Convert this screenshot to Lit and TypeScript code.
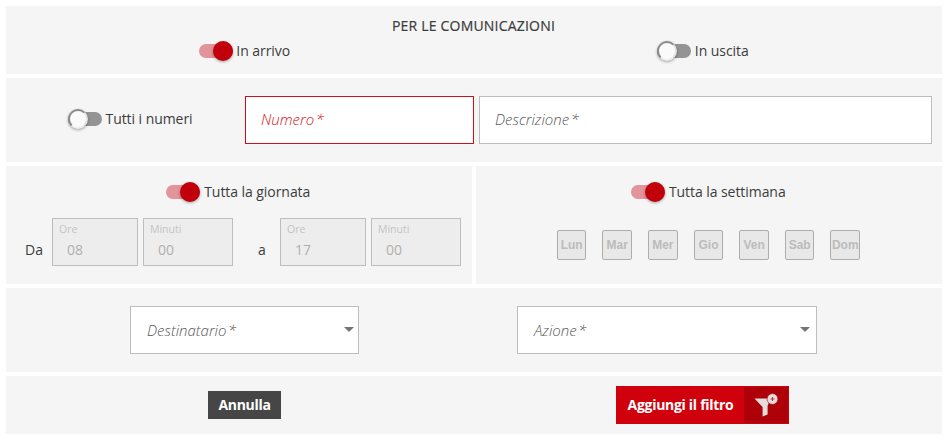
import { LitElement, html, css } from "lit";
import { customElement, property } from "lit/decorators.js";

@customElement("slide-toggle")
class SlideToggle extends LitElement {
  @property({ type: Boolean }) checked = false;
  @property() label = "";
  static styles = css`
    :host { display: inline-flex; align-items: center; gap: 3.5px; height: 20px; white-space: nowrap; }
    .track { display: flex; align-items: center; width: 34px; height: 14px; border-radius: 7px; background: #949494; flex: none; }
    .track.on { background: #e2949a; justify-content: flex-end; }
    .knob { box-sizing: border-box; flex: none; width: 20px; height: 20px; border-radius: 50%; background: #fafafa; border: 2px solid; border-color: #8b8b8b #e4e4e4 #eeeeee #8b8b8b; box-shadow: 0 1px 3px rgba(0, 0, 0, 0.35); }
    .on .knob { background: #c2000b; border: 0; }
    .label { line-height: 20px; letter-spacing: -0.06px; }
  `;
  render() {
    return html`<span class="track ${this.checked ? "on" : ""}"><span class="knob"></span></span
      ><span class="label">${this.label}</span>`;
  }
}

@customElement("text-field")
class TextField extends LitElement {
  @property() label = "";
  @property({ type: Boolean }) invalid = false;
  @property({ type: Boolean }) select = false;
  static styles = css`
    :host { display: block; }
    .box { box-sizing: border-box; height: 48px; padding: 0 var(--end, 4px) 0 15px; border: 1px solid #bdbdbd; background: #fff; color: #585858; display: flex; align-items: center; justify-content: space-between; }
    .box.invalid { border-color: #c9101c; color: #d01420; }
    .text { font-style: italic; font-weight: 300; font-size: 15px; line-height: 20px; padding-bottom: 2px; }
    .select .text { padding: 0 0 0 1px; }
    .star { margin-left: 1.6px; }
    .arrow { width: 0; height: 0; border: 5px solid transparent; border-top-color: #757575; border-bottom: 0; margin-bottom: 1px; }
  `;
  render() {
    return html`<div class="box ${this.invalid ? "invalid" : ""} ${this.select ? "select" : ""}">
      <span class="text">${this.label}<span class="star">*</span></span>
      ${this.select ? html`<span class="arrow"></span>` : null}
    </div>`;
  }
}

@customElement("time-field")
class TimeField extends LitElement {
  @property() label = "";
  @property() value = "";
  static styles = css`
    :host { display: block; }
    .box { box-sizing: border-box; height: 48px; border: 1px solid #bdbdbd; background: #ededed; color: #b0b0b0; padding: 3px 0 0 6px; }
    .label { font-size: 10.5px; line-height: 14px; color: #c4c4c4; }
    .value { padding: 4px 0 0 8px; line-height: 20px; }
  `;
  render() {
    return html`<div class="box"><div class="label">${this.label}</div><div class="value">${this.value}</div></div>`;
  }
}

@customElement("app-root")
class AppRoot extends LitElement {
  static styles = css`
    :host { display: grid; box-sizing: border-box; width: 944px; height: 439px; padding: 6px 2px 5px 6px; gap: 4px; grid-template-rows: 68px 84px 118px 84px 58px; background: #fff; color: #3c3c3c; font: 14px "Open Sans", sans-serif; }
    .panel { background: #f5f5f5; box-sizing: border-box; min-width: 0; }
    .direction { padding: 10px 10px 0 9px; }
    .title { text-align: center; line-height: 20px; font-weight: 500; letter-spacing: 0.2px; -webkit-text-stroke: 0.2px #3c3c3c; }
    .pair { display: grid; grid-template-columns: 459px 458px; justify-items: center; padding-top: 5px; }
    .numbers { display: grid; grid-template-columns: 172px 229px 453px; align-items: center; padding-left: 62px; column-gap: 5px; }
    .numbers slide-toggle { margin-bottom: 2px; }
    .columns { display: grid; grid-template-columns: 466px 466px; gap: 4px; }
    .period { display: flex; flex-direction: column; align-items: center; padding-top: 16px; }
    .period slide-toggle { gap: 4px; margin-right: 1.5px; }
    .times { display: grid; grid-template-columns: 22px 86px 90px 37px 86px 90px; column-gap: 5px; padding: 16px 0 0 19px; align-self: flex-start; }
    .word { padding-top: 22px; line-height: 20px; }
    .to { padding-left: 20px; }
    .days { display: flex; gap: 16px; padding: 28px 0 0 80.9px; align-self: flex-start; }
    .day { box-sizing: border-box; display: flex; justify-content: center; align-items: center; width: 29.6px; height: 30px; border: 1px solid #adadad; border-radius: 2px; background: #e8e8e8; color: #bcbcbc; font: bold 12px "Liberation Sans", sans-serif; }
    .targets { display: grid; grid-template-columns: 229px 300px; column-gap: 158px; align-items: center; padding-left: 124px; }
    .targets .wide { --end: 6px; }
    .actions { display: flex; align-items: center; padding-left: 202px; gap: 335px; color: #fff; font-weight: 700; letter-spacing: -0.3px; }
    .cancel { width: 73px; height: 28px; line-height: 28px; text-align: center; background: #464646; }
    .add { box-sizing: border-box; display: flex; width: 173px; height: 38px; padding: 1px; background: #d0000c; line-height: 36px; }
    .add-text { width: 127px; text-align: center; }
    .add-icon { flex: 1; display: flex; align-items: center; justify-content: center; background: #ad0009; }
  `;
  render() {
    const days = ["Lun", "Mar", "Mer", "Gio", "Ven", "Sab", "Dom"];
    return html`
      <section class="panel direction">
        <div class="title">PER LE COMUNICAZIONI</div>
        <div class="pair">
          <slide-toggle checked label="In arrivo"></slide-toggle>
          <slide-toggle label="In uscita"></slide-toggle>
        </div>
      </section>
      <section class="panel numbers">
        <slide-toggle label="Tutti i numeri"></slide-toggle>
        <text-field invalid label="Numero"></text-field>
        <text-field label="Descrizione"></text-field>
      </section>
      <div class="columns">
        <section class="panel period">
          <slide-toggle checked label="Tutta la giornata"></slide-toggle>
          <div class="times">
            <span class="word">Da</span>
            <time-field label="Ore" value="08"></time-field>
            <time-field label="Minuti" value="00"></time-field>
            <span class="word to">a</span>
            <time-field label="Ore" value="17"></time-field>
            <time-field label="Minuti" value="00"></time-field>
          </div>
        </section>
        <section class="panel period">
          <slide-toggle checked label="Tutta la settimana"></slide-toggle>
          <div class="days">${days.map((d) => html`<span class="day">${d}</span>`)}</div>
        </section>
      </div>
      <section class="panel targets">
        <text-field select label="Destinatario"></text-field>
        <text-field class="wide" select label="Azione"></text-field>
      </section>
      <section class="panel actions">
        <div class="cancel">Annulla</div>
        <div class="add">
          <span class="add-text">Aggiungi il filtro</span>
          <span class="add-icon">
            <svg width="24" height="24" viewBox="0 0 24 24">
              <path d="M0.5 5.6H17L13.6 12.6V21.6L8.6 23.4V14Z" fill="#e3dede" />
              <circle cx="18.5" cy="6" r="5.4" fill="#e3dede" stroke="#ad0009" stroke-width="0.6" />
              <path d="M16.5 6h4M18.5 4v4" stroke="#c0303a" stroke-width="1" />
            </svg>
          </span>
        </div>
      </section>
    `;
  }
}
